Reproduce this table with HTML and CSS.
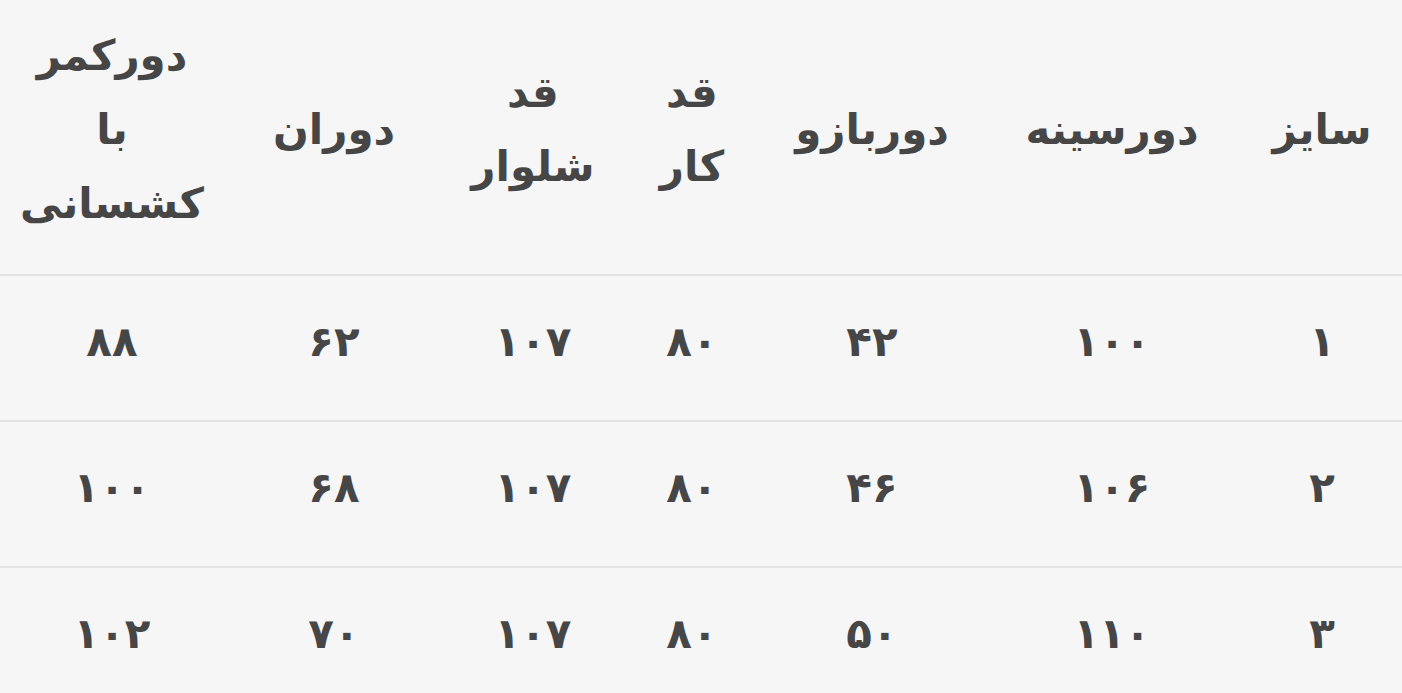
FILE: index.html
```html
<!doctype html>
<html lang="fa" dir="rtl">
<head>
    <meta charset="UTF-8">
    <meta name="viewport" content="width=device-width, initial-scale=1.0">
    <title>جدول سایز</title>
    <link rel="stylesheet" href="styles.css">
</head>
<body>
<table class="size-table">
    <colgroup>
        <col class="c-size">
        <col class="c-chest">
        <col class="c-arm">
        <col class="c-top">
        <col class="c-pants">
        <col class="c-thigh">
        <col class="c-waist">
    </colgroup>
    <thead>
    <tr>
        <th>سایز</th>
        <th>دورسینه</th>
        <th>دوربازو</th>
        <th>قد<br>کار</th>
        <th>قد<br>شلوار</th>
        <th>دوران</th>
        <th>دورکمر<br>با<br>کشسانی</th>
    </tr>
    </thead>
    <tbody>
    <tr>
        <td>۱</td>
        <td>۱۰۰</td>
        <td>۴۲</td>
        <td>۸۰</td>
        <td>۱۰۷</td>
        <td>۶۲</td>
        <td>۸۸</td>
    </tr>
    <tr>
        <td>۲</td>
        <td>۱۰۶</td>
        <td>۴۶</td>
        <td>۸۰</td>
        <td>۱۰۷</td>
        <td>۶۸</td>
        <td>۱۰۰</td>
    </tr>
    <tr>
        <td>۳</td>
        <td>۱۱۰</td>
        <td>۵۰</td>
        <td>۸۰</td>
        <td>۱۰۷</td>
        <td>۷۰</td>
        <td>۱۰۲</td>
    </tr>
    </tbody>
</table>
</body>
</html>
```
FILE: styles.css
```css
html, body {
    margin: 0;
    background: #f6f6f6;
}
.size-table {
    width: 1402px;
    table-layout: fixed;
    border-collapse: collapse;
    font-family: "DejaVu Sans", sans-serif;
    font-size: 42px;
    font-weight: bold;
    line-height: 74px;
    color: #464646;
}
.c-size { width: 160px; }
.c-chest { width: 260px; }
.c-arm { width: 220px; }
.c-top { width: 140px; }
.c-pants { width: 178px; }
.c-thigh { width: 220px; }
.c-waist { width: 224px; }
.size-table th,
.size-table td {
    padding: 0;
    text-align: center;
    vertical-align: middle;
}
.size-table th {
    height: 260px;
    padding-bottom: 14px;
    border-bottom: 2px solid #e2e2e2;
}
.size-table td {
    height: 132px;
    padding-bottom: 12px;
    border-bottom: 2px solid #e2e2e2;
}
```
